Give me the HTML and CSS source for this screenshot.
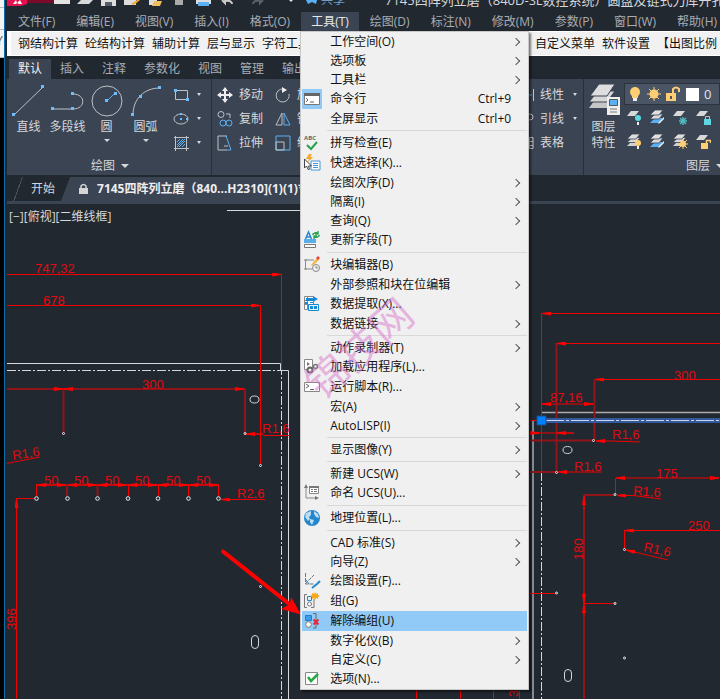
FILE: index.html
```html
<!DOCTYPE html>
<html lang="zh-CN">
<head>
<meta charset="utf-8">
<title>7145四阵列立磨</title>
<link rel="stylesheet" href="styles.css">
</head>
<body>
<svg class="defs" width="0" height="0" aria-hidden="true">
  <defs>
    <symbol id="sheet" viewBox="0 0 16 16"><path d="M5 2h8l-4 5H1z" fill="#d8d8d8"/></symbol>
    <symbol id="sheets" viewBox="0 0 16 16"><path d="M6 8h8l-4 5H1z" fill="#d0d0d0"/><path d="M6 4.500h8l-4 5H1z" fill="#d8d8d8" stroke="#3b4453" stroke-width=".8"/><path d="M6 1h8l-4 5H1z" fill="#dedede" stroke="#3b4453" stroke-width=".8"/></symbol>
    <symbol id="sheetsblue" viewBox="0 0 16 16"><path d="M6 9h8l-4 5H1z" fill="#5ab0f5"/><path d="M6 5h8l-4 5H1z" fill="#d8d8d8" stroke="#3b4453" stroke-width=".8"/><path d="M6 1h8l-4 5H1z" fill="#dedede" stroke="#3b4453" stroke-width=".8"/><path d="M15 8l-5 5-1 2 2-1 4-4z" fill="#eee"/></symbol>
    <marker id="tip" viewBox="0 0 9 4" refX="9" refY="2" markerWidth="9" markerHeight="4" markerUnits="userSpaceOnUse" orient="auto-start-reverse"><path d="M0 0L9 1.500V2.500L0 4z" fill="#f00"/></marker>
  </defs>
</svg>

<div class="screen">
  <div class="behind"><span></span><span></span><span>Y</span></div>
  <div class="app">
    <header class="titlebar">
      <svg class="quick" width="314" height="12" aria-hidden="true">
        <path d="M0 0h20v4l-6 2H0z" fill="#e5104f"/><path d="M6 4l3-4 1 3 3-3 2 4h-3l-2-1-1 1z" fill="#fff"/>
        <path d="M20 0h28v3H20z" fill="#7b0a2b"/>
        <path d="M47 0h16v4H47z" fill="#e3e3e3"/><path d="M70 4l4-4h12l-4 4z" fill="#d8d8d8"/>
        <path d="M94 0h15v6H94z" fill="#ddd"/><path d="M98 2h7v4h-7z" fill="#555c68"/>
        <path d="M117 0h12v5H117z" fill="#ddd"/><path d="M124 4l6-4h3l-6 5z" fill="#f5a93a"/>
        <path d="M142 0h8v5h-8z" fill="#ddd"/><path d="M147 1h8l-2 5h-8z" fill="#f2bd5f"/>
        <path d="M168 0h8v5h-8z" fill="#aaa"/>
        <path d="M189 0h15v4h-15z" fill="#ddd"/><path d="M191 2h11v4h-11z" fill="#5ab0f5"/>
        <path d="M215 0l3 3v-2c5-1 7 1 7 3" fill="none" stroke="#ccc" stroke-width="2"/>
        <path d="M256 0l-3 3v-2c-5-1-7 1-7 3" fill="none" stroke="#59616d" stroke-width="2"/>
        <path d="M282 0h4l-2 2z" fill="#ddd"/>
        <path d="M299 0h11l-1 4-4-2-4 2z" fill="#5ab0f5"/>
      </svg>
      <span class="share">共享</span>
      <span class="doc">7145四阵列立磨（840D-SL数控系统）圆盘及链式刀库开孔图[BFH2310]</span>
    </header>

    <nav class="menubar">
      <button>文件(F)</button><button>编辑(E)</button><button>视图(V)</button><button>插入(I)</button><button>格式(O)</button>
      <div class="open">
        <button class="current">工具(T)</button>
        <div class="menu" role="menu">
          <button class="sub" role="menuitem">工作空间(O)</button>
          <button class="sub" role="menuitem">选项板</button>
          <button class="sub" role="menuitem">工具栏</button>
          <button class="pic on" role="menuitem"><svg viewBox="0 0 20 20"><path d="M2.500 4.500h15v11h-15z" fill="#fff" stroke="#777"/><path d="M2 4h16v3H2z" fill="#666"/><path d="M4 9l2 2-2 2M8 13h4" fill="none" stroke="#666"/></svg>命令行<kbd>Ctrl+9</kbd></button>
          <button role="menuitem">全屏显示<kbd>Ctrl+0</kbd></button>
          <hr>
          <button class="pic" role="menuitem"><svg viewBox="0 0 20 20"><text x="2" y="7" font-size="6" font-weight="bold" fill="#666">ABC</text><path d="M5 12l4 4 6-7" fill="none" stroke="#27a050" stroke-width="2"/></svg>拼写检查(E)</button>
          <button class="pic" role="menuitem"><svg viewBox="0 0 20 20"><path d="M9 8h9v9H9z" fill="#fff" stroke="#4595d5"/><path d="M11 10.500h5M11 12.500h5M11 14.500h5" stroke="#4595d5"/><path d="M2.500 6v9l2-2 2 4 1-1-1-3h3z" fill="#fff" stroke="#444"/><path d="M7 1L4 6h3L6 9l5-5H8l2-3z" fill="#f7a61b"/></svg>快速选择(K)...</button>
          <button class="sub" role="menuitem">绘图次序(D)</button>
          <button class="sub" role="menuitem">隔离(I)</button>
          <button class="sub" role="menuitem">查询(Q)</button>
          <button class="pic" role="menuitem"><svg viewBox="0 0 20 20"><path d="M3.500 9L6.500 2l3 7M4.500 7h4" fill="none" stroke="#2888cf" stroke-width="1.500"/><path d="M2 9h12v4H2z" fill="#5aaee8"/><path d="M2.500 14.500h11v3h-11z" fill="#fff" stroke="#777"/><path d="M10.500 5a4 3 0 0 1 6-2M17.500 5a4 3 0 0 1-6 2M16 1v3h-3M12 9V6h3" fill="none" stroke="#27a050" stroke-width="1.300"/></svg>更新字段(T)</button>
          <hr>
          <button class="pic" role="menuitem"><svg viewBox="0 0 20 20"><path d="M12 5H3.500v9H10M2 14h3M2 5h3" fill="none" stroke="#888"/><path d="M9 10l6-7 2 2-7 6z" fill="#f5b43a"/><path d="M14 3l2-2 2 2-2 2z" fill="#e94040"/><circle cx="14" cy="13" r="3.500" fill="none" stroke="#888"/><path d="M14 11v2h2" fill="none" stroke="#888"/></svg>块编辑器(B)</button>
          <button class="sub" role="menuitem">外部参照和块在位编辑</button>
          <button class="pic" role="menuitem"><svg viewBox="0 0 20 20"><path d="M2.500 2.500h9v13h-9zM2 6.500h9M2 10.500h6M5.500 2v13" fill="#fff" stroke="#888"/><path d="M4 4h7V2l5 3-5 3V7H4z" fill="#148ad7"/><path d="M3 8h3v2H3zM8 8h3v1H8z" fill="#148ad7"/><path d="M6.500 10.500h10v6h-10z" fill="#e9f5fd" stroke="#148ad7"/><path d="M8 12h3v3H8zM12 12h3v3h-3z" fill="#148ad7"/></svg>数据提取(X)...</button>
          <button class="sub" role="menuitem">数据链接</button>
          <hr>
          <button class="sub" role="menuitem">动作录制器(T)</button>
          <button class="pic" role="menuitem"><svg viewBox="0 0 20 20"><path d="M2.500 2.500h8v10h-8z" fill="#fff" stroke="#888"/><path d="M5 5l3 2-3 2z" fill="#777"/><circle cx="8" cy="13" r="2.500" fill="#eee" stroke="#666" stroke-width="2"/><circle cx="13.500" cy="9.500" r="2" fill="#eee" stroke="#777" stroke-width="1.500"/></svg>加载应用程序(L)...</button>
          <button class="pic" role="menuitem"><svg viewBox="0 0 20 20"><path d="M2.500 5.500h15v9h-15z" fill="#fff" stroke="#888"/><path d="M4 7l3 2-3 2M8 12.500h4" fill="none" stroke="#666"/></svg>运行脚本(R)...</button>
          <button class="sub" role="menuitem">宏(A)</button>
          <button class="sub" role="menuitem">AutoLISP(I)</button>
          <hr>
          <button class="sub" role="menuitem">显示图像(Y)</button>
          <hr>
          <button class="sub" role="menuitem">新建 UCS(W)</button>
          <button class="pic" role="menuitem"><svg viewBox="0 0 20 20"><path d="M4 4v11h11" fill="none" stroke="#888"/><path d="M4 1l2 4H2zM17 15l-4-2v4z" fill="#777"/><path d="M7.500 3.500h9v7h-9z" fill="#fff" stroke="#888"/><path d="M7 3h10v2H7zM9 6h2v1H9zM12 6h3v1h-3zM9 8h2v1H9zM12 8h3v1h-3z" fill="#777"/></svg>命名 UCS(U)...</button>
          <hr>
          <button class="pic" role="menuitem"><svg viewBox="0 0 20 20"><circle cx="10" cy="10" r="8" fill="#2686cb"/><path d="M4 5l5-2 0 4-2 2 1 2-2 2-3-4zM8 11l4 1-2 5-2-3zM12 3l4 3 1 4-3-1-2-3z" fill="#b9def3"/></svg>地理位置(L)...</button>
          <hr>
          <button class="sub" role="menuitem">CAD 标准(S)</button>
          <button class="sub" role="menuitem">向导(Z)</button>
          <button class="pic" role="menuitem"><svg viewBox="0 0 20 20"><path d="M3.500 2v11H12M3 13L12 4" fill="none" stroke="#777" stroke-dasharray="4 1"/><path d="M10 17l5-4 3-3" fill="none" stroke="#2388d0" stroke-width="2"/><path d="M4 9l3 4" stroke="#2388d0"/></svg>绘图设置(F)...</button>
          <button class="pic" role="menuitem"><svg viewBox="0 0 20 20"><path d="M5 3.500H2.500v13H5M9 16.500h3V8" fill="none" stroke="#777"/><path d="M5.500 5.500h4v4h-4z" fill="#d9efff" stroke="#2388d0"/><circle cx="7.500" cy="13" r="2" fill="#fff" stroke="#777"/><path d="M13 1l1 2 2-1 0 2 2 1-2 1v2l-2-1-1 2-1-2-2 1v-2l-2-1 2-1V2l2 1z" fill="#f8a81e"/></svg>组(G)</button>
          <button class="pic hot" role="menuitem"><svg viewBox="0 0 20 20"><path d="M3.500 4.500h6v5h-6z" fill="#3e9be6" stroke="#2380c8"/><circle cx="6.500" cy="13.500" r="2.800" fill="#fff" stroke="#777"/><path d="M11 2.500h3V17h-3" fill="none" stroke="#666"/><path d="M11.500 8.500l5 5m0-5l-5 5" stroke="#e9263c" stroke-width="2"/></svg>解除编组(U)</button>
          <button class="sub" role="menuitem">数字化仪(B)</button>
          <button class="sub" role="menuitem">自定义(C)</button>
          <button class="pic" role="menuitem"><svg viewBox="0 0 20 20"><path d="M3.500 3.500h12v12h-12z" fill="#fff" stroke="#888"/><path d="M6 8l3 4 7-7" fill="none" stroke="#27a844" stroke-width="2.500"/></svg>选项(N)...</button>
          <span class="stamp">锦技网</span>
        </div>
      </div>
      <button>绘图(D)</button><button>标注(N)</button><button>修改(M)</button><button>参数(P)</button><button>窗口(W)</button><button>帮助(H)</button>
    </nav>

    <div class="plugins">
      <div><button>钢结构计算</button><button>砼结构计算</button><button>辅助计算</button><button>层与显示</button><button>字符工具</button></div>
      <div><button>自定义菜单</button><button>软件设置</button><button>【出图比例</button></div>
    </div>

    <div class="tabs">
      <button class="current">默认</button><button>插入</button><button>注释</button><button>参数化</button><button>视图</button><button>管理</button><button>输出</button>
    </div>

    <div class="ribbon">
      <section class="panel draw">
        <div class="tools">
          <button class="big"><svg viewBox="0 0 34 34"><path d="M2 32L31 4" class="ln"/><path d="M0 30h3v3H0zM29 2h3v3h-3z" class="pt"/></svg>直线</button>
          <button class="big"><svg viewBox="0 0 34 34"><path d="M1 26h21c13 0 13-15 0-15" class="ln"/><path d="M0 24h3v3H0zM20 24h3v3h-3zM20 9h3v3h-3z" class="pt"/></svg>多段线</button>
          <button class="big more"><svg viewBox="0 0 34 34"><circle cx="17" cy="18" r="15" class="ln"/><path d="M17 18l8-8" stroke="#5ab0f5"/><path d="M15 16h3v3h-3zM24 9h3v3h-3z" class="pt"/></svg>圆</button>
          <button class="big more"><svg viewBox="0 0 34 34"><path d="M4 32C4 16 15 5 31 5" class="ln"/><path d="M2 30h3v3H2zM10 12h3v3h-3zM29 3h3v3h-3z" class="pt"/></svg>圆弧</button>
          <div class="shapes">
            <button aria-label="矩形"><svg viewBox="0 0 16 16"><path d="M2.500 3.500h12v9h-12z" class="ln"/><path d="M1 2h3v3H1zM13 11h3v3h-3z" class="pt"/></svg></button>
            <button aria-label="椭圆"><svg viewBox="0 0 16 16"><ellipse cx="8" cy="8" rx="7" ry="5" class="ln"/><path d="M7 7h2v2H7zM7 2h2v2H7zM13 7h2v2h-2z" class="pt"/></svg></button>
            <button aria-label="填充"><svg viewBox="0 0 16 16"><path d="M1 2.500h15M1 13.500h15M2.500 1v15M13.500 1v15" class="ln"/><path d="M4 7l3-3M4 10l6-6M4 12l8-8M6 12l6-6M9 12l3-3" stroke="#5ab0f5"/></svg></button>
          </div>
        </div>
        <h2>绘图<i class="caret"></i></h2>
      </section>
      <section class="panel modify">
        <div class="tools grid">
          <button><svg viewBox="0 0 16 16"><path d="M8 2v12M2 8h12" stroke="#eee" stroke-width="2"/><path d="M8 0l3 4H5zM8 16l3-4H5zM0 8l4-3v6zM16 8l-4-3v6z" fill="#eee"/></svg>移动</button>
          <button><svg viewBox="0 0 16 16"><path d="M8 2A6.500 6.500 0 1 0 14 7" class="ln"/><path d="M7 0l5 3-5 3z" fill="#eee"/></svg>旋转</button>
          <button><svg viewBox="0 0 16 16"><circle cx="4" cy="3.500" r="3" class="ln"/><path d="M9 3h4v4" class="ln"/><circle cx="6" cy="12" r="3" class="bl"/><circle cx="12" cy="12" r="3" class="bl"/></svg>复制</button>
          <button><svg viewBox="0 0 16 16"><path d="M7 2v12H1z" class="ln"/><path d="M9 2v12h6z" class="bl"/></svg>镜像</button>
          <button><svg viewBox="0 0 16 16"><path d="M10 1H1v14h9M7 11h4" class="ln"/><path d="M9 1l5 14h-4" class="bl"/></svg>拉伸</button>
          <button><svg viewBox="0 0 16 16"><path d="M1 1h14v14H1z" class="bl"/><path d="M1 7h8v8H1z" class="ln"/></svg>缩放</button>
        </div>
      </section>
      <section class="panel notes">
        <div class="tools rows">
          <button><svg viewBox="0 0 16 16"><path d="M0 8h13" stroke="#5ab0f5"/><path d="M14.500 2v12" class="ln"/></svg>线性<i class="caret"></i></button>
          <button><svg viewBox="0 0 16 16"><circle cx="11" cy="6" r="3" class="ln"/></svg>引线<i class="caret"></i></button>
          <button><svg viewBox="0 0 16 16"><path d="M1 2.500h13v11H1zM1 6.500h13M1 10.500h13M10.500 2v12" class="ln"/></svg>表格</button>
        </div>
      </section>
      <section class="panel layers">
        <div class="tools">
          <button class="props"><svg viewBox="0 0 34 34"><path d="M10 14h18l-8 11H2z" fill="#c6c6c6"/><path d="M11 8h17l-8 11H2z" fill="#d6d6d6" stroke="#3b4453"/><path d="M12 1h16L20 13H3z" fill="#dedede" stroke="#3b4453"/><path d="M20 14h13v18H20z" fill="#eee"/><path d="M22.500 16.500h8v6h-8z" fill="#5ab0f5" stroke="#555"/><path d="M23 26h7M23 29h7" stroke="#777"/></svg>图层<br>特性</button>
          <div class="set">
            <button class="combo"><svg width="96" height="20" viewBox="0 0 96 20"><circle cx="10" cy="8" r="5" fill="#fdce74"/><path d="M7 11h6v3H7z" fill="#fdce74"/><path d="M8 14h4v3H8z" fill="#eee"/><circle cx="29" cy="10" r="4.500" fill="#fdce74"/><path d="M29 3v14M22 10h14M24 5l10 10M34 5L24 15" stroke="#fdce74"/><path d="M41 9h10v8H41z" fill="#fdce74"/><path d="M48 9V5q3-3 6 0v3" fill="none" stroke="#fdce74" stroke-width="2"/><path d="M45 12h2v3h-2z" fill="#555"/><path d="M61 4h13v13H61z" fill="#fff"/><text x="79" y="15" font-size="13" fill="#e3e3e3">0</text></svg></button>
            <div class="icons">
              <button aria-label="关闭"><svg viewBox="0 0 16 16"><use href="#sheet"/><circle cx="12" cy="9" r="3" fill="#60d6e2"/><path d="M11 13h2v3h-2z" fill="#eee"/></svg></button>
              <button aria-label="置为当前"><svg viewBox="0 0 16 16"><use href="#sheetsblue"/></svg></button>
              <button aria-label="冻结"><svg viewBox="0 0 16 16"><use href="#sheet"/><path d="M11 8v8M7 12h8M8 9l6 6M14 9l-6 6" stroke="#4db8bd" stroke-width="1.500"/></svg></button>
              <button aria-label="锁定"><svg viewBox="0 0 16 16"><use href="#sheet"/><path d="M9 10h7v6H9z" fill="#60d6e2"/><path d="M10.500 10V7.500h4V10" class="ln"/></svg></button>
              <button aria-label="打开"><svg viewBox="0 0 16 16"><use href="#sheets"/><circle cx="12" cy="10" r="3" fill="#fdce74"/><path d="M11 13h2v3h-2z" fill="#eee"/></svg></button>
              <button aria-label="匹配"><svg viewBox="0 0 16 16"><use href="#sheetsblue"/></svg></button>
              <button aria-label="解冻"><svg viewBox="0 0 16 16"><use href="#sheets"/><circle cx="11" cy="11" r="3" fill="#fdce74"/><path d="M11 6v10M6 11h10M7 7l8 8M15 7l-8 8" stroke="#fdce74"/></svg></button>
              <button aria-label="解锁"><svg viewBox="0 0 16 16"><use href="#sheet"/><path d="M6 10h7v6H6z" fill="#fdce74"/><path d="M11.500 10V7.500h4V10" fill="none" stroke="#fdce74" stroke-width="1.500"/></svg></button>
            </div>
          </div>
        </div>
        <h2>图层<i class="caret"></i></h2>
      </section>
    </div>

    <div class="files">
      <button>开始</button>
      <button class="current"><svg viewBox="0 0 10 12"><path d="M1 5h9v6H1z" fill="#d5d5d5"/><path d="M3 5V3q2.500-3 5 0v2" fill="none" stroke="#d5d5d5" stroke-width="1.500"/></svg>7145四阵列立磨（840...H2310](1)(1)*</button>
    </div>

    <main class="canvas">
      <svg class="drawing" width="100%" height="100%">
        <g transform="translate(-7 -204)">
          <text class="view" x="9" y="221">[−][俯视][二维线框]</text>
          <g class="white">
            <path d="M227 210.500H302M7 363.500H280.500V370.500H288.500V699"/>
            <path d="M7 370.500H281.500V699M541.500 472V699" stroke-dasharray="9 2 2 2"/>
            <ellipse cx="254.500" cy="399.500" rx="4.500" ry="3.500"/><rect x="251.500" y="635.500" width="7" height="13" rx="3.500"/>
            <ellipse cx="567.500" cy="450" rx="4.500" ry="3.500"/><rect x="564.500" y="669.500" width="7" height="12" rx="3.500"/>
          </g>
          <path d="M533 421V699" stroke="#858b95" stroke-width="2"/>
          <path d="M541 412.500H720" stroke="#aaa" stroke-width="1.500"/>
          <g class="dim">
            <path d="M7 389H245M63.500 389V433M245 389V433M245 434H263"/>
            <path d="M36.500 485H218.500M67 485V496M97.500 485V496"/>
            <path d="M530 440.500H594M594.500 379V440M556.500 343V472M530 472H556M584 495H615M584 495V699"/>
          </g>
          <g class="red">
            <path d="M7 274.500H281" marker-end="url(#tip)"/><path d="M281.500 274V370"/>
            <path d="M7 305.500H260" marker-end="url(#tip)"/><path d="M260.500 305V465"/>
            <path d="M53 389H63" marker-end="url(#tip)"/><path d="M73 389H64" marker-end="url(#tip)"/><path d="M235 389H244" marker-end="url(#tip)"/>
            <path d="M263 434H246" marker-end="url(#tip)"/><path d="M263 435.500H290M7 463.500L14 462L40 457"/>
            <path d="M37 485H66" marker-start="url(#tip)" marker-end="url(#tip)"/><path d="M68 485H97" marker-start="url(#tip)" marker-end="url(#tip)"/><path d="M98 485H127" marker-start="url(#tip)" marker-end="url(#tip)"/><path d="M128 485H157" marker-start="url(#tip)" marker-end="url(#tip)"/><path d="M158 485H188" marker-start="url(#tip)" marker-end="url(#tip)"/><path d="M189 485H218" marker-start="url(#tip)" marker-end="url(#tip)"/>
            <path d="M36.500 484V496M128.500 485V496M158.500 484V496M188.500 484V496M218.500 484V496M16 498.500H36"/>
            <path d="M265 499.500H221" marker-end="url(#tip)"/><path d="M16.500 699V499" marker-end="url(#tip)"/>
            <path d="M720 313.500H542" marker-end="url(#tip)"/><path d="M541.500 313V472"/>
            <path d="M720 343.500H557" marker-end="url(#tip)"/><path d="M720 379.500H595" marker-end="url(#tip)"/>
            <path d="M542 404H593" marker-start="url(#tip)" marker-end="url(#tip)"/>
            <path d="M530 420.500H537M530 433H574"/><path d="M530 433H539" marker-end="url(#tip)"/><path d="M574 433H557" marker-end="url(#tip)"/>
            <path d="M640 442L612 441H596" marker-end="url(#tip)"/><path d="M602 472H558" marker-end="url(#tip)"/>
            <path d="M616 478H719" marker-start="url(#tip)" marker-end="url(#tip)"/><path d="M615.500 478V494"/><path d="M661 499L633 495.500H617" marker-end="url(#tip)"/>
            <path d="M584 510V496" marker-end="url(#tip)"/><path d="M720 530.500H625" marker-end="url(#tip)"/><path d="M624.500 530V549"/><path d="M668 560L626 550" marker-end="url(#tip)"/>
            <path d="M530 593.500H556M584 603.500H615"/><path d="M584 592V603" marker-end="url(#tip)"/><path d="M584 616V604" marker-end="url(#tip)"/>
            <path d="M416.500 690V699M460.500 690V699M493.500 690V699M519.500 690V699"/>
          </g>
          <g class="nums">
            <text x="35" y="273">747,32</text><text x="43" y="305">678</text><text x="142" y="389">300</text><text x="262" y="433">R1,6</text>
            <text x="13" y="460" transform="rotate(-9 13 460)">R1,6</text>
            <text x="44" y="485">50</text><text x="74" y="485">50</text><text x="105" y="485">50</text><text x="135" y="485">50</text><text x="166" y="485">50</text><text x="196" y="485">50</text>
            <text x="237" y="498">R2,6</text><text transform="translate(16 630) rotate(-90)">396</text>
            <text x="674" y="380">300</text><text x="550" y="402">87,16</text><text x="612" y="439">R1,6</text><text x="574" y="471">R1,6</text><text x="656" y="478">175</text>
            <text x="633" y="495" transform="rotate(4 633 495)">R1,6</text><text transform="translate(583 560) rotate(-90)">180</text><text x="688" y="530">250</text>
            <text x="643" y="551" transform="rotate(12 643 551)">R1,6</text><text transform="translate(518 697) rotate(-90)">3</text>
          </g>
          <g class="holes">
            <circle cx="36.500" cy="498.500" r="1.800"/><circle cx="67.500" cy="498.500" r="1.800"/><circle cx="97.500" cy="498.500" r="1.800"/><circle cx="128" cy="498.500" r="1.800"/><circle cx="158" cy="498.500" r="1.800"/><circle cx="188.500" cy="498.500" r="1.800"/><circle cx="218.500" cy="498.500" r="1.800"/>
            <circle cx="63.500" cy="433.500" r="1"/><circle cx="245" cy="433.500" r="1"/><circle cx="260.500" cy="465.500" r="1"/><circle cx="260.500" cy="586.500" r="1"/>
            <circle cx="593.500" cy="440.500" r="1"/><circle cx="556.500" cy="472.500" r="1"/><circle cx="615" cy="494.500" r="1"/><circle cx="624.500" cy="549.500" r="1"/><circle cx="556.500" cy="593" r="1"/><circle cx="615" cy="603.500" r="1"/><circle cx="624.500" cy="658" r="1"/>
          </g>
          <path d="M546 420.500H720" stroke="#34589c" stroke-width="5"/><path d="M546 420.500H720" stroke="#cdd6ea" stroke-dasharray="18 2 3 2"/>
          <path d="M537 416h9v9h-9z" fill="#0080ff" stroke="#174d86"/>
          <path d="M223 551.500L288 603" stroke="#f00" stroke-width="4" stroke-linecap="round"/><path d="M301 614.500L291 597L290 604L281 609z" fill="#f00"/>
        </g>
      </svg>
    </main>
  </div>
</div>
</body>
</html>
```

FILE: styles.css
```css
* { box-sizing: border-box; }

body {
  margin: 0;
  background: #222830;
  color: #d6d8db;
  font: 12px/16px "Open Sans", "Noto Sans CJK SC", sans-serif;
}

button {
  margin: 0;
  padding: 0;
  border: 0;
  background: none;
  color: inherit;
  font: inherit;
  white-space: nowrap;
}

svg { display: block; flex: none; }
.defs { position: absolute; }

.screen { display: flex; height: 100vh; overflow: hidden; }

/* Edge of the window behind the application */
.behind {
  flex: none;
  width: 5px;
  background: #000;
  border-right: 1px solid #0a6fae;
  overflow: hidden;
}
.behind span { display: block; height: 22px; background: #f3f3f3; border-bottom: 1px solid #bbb; color: #555; }
.behind span:first-child { height: 8px; }
.behind span:last-child { height: 28px; text-indent: -4px; line-height: 22px; }

.app {
  flex: 1;
  min-width: 0;
  display: flex;
  flex-direction: column;
  padding-left: 2px;
}

.titlebar { display: flex; flex: none; height: 12px; overflow: hidden; line-height: 12px; white-space: nowrap; }
.share { flex: none; margin-top: -6px; width: 64px; color: #6d9fc5; }
.doc { margin-top: -6px; font-size: 13px; }

.menubar { display: flex; gap: 1px; flex: none; height: 19px; padding-left: 1px; color: #a9adb3; }
.menubar > button, .open > button { height: 19px; padding: 0 10px; }
.open { position: relative; }
.open > .current { background: #3b4453; color: #e6e8ea; }

.menu {
  position: absolute;
  z-index: 2;
  top: 100%;
  left: -1px;
  width: 229px;
  padding: 0 1px;
  background: #f0f0f0;
  border: 1px solid #c8c8c8;
  box-shadow: 2px 2px 2px rgba(0, 0, 0, .5);
  color: #111;
}
.menu button { display: flex; align-items: center; width: 225px; height: 19px; padding-left: 28px; }
.menu .pic { height: 20px; padding-left: 0; }
.menu .pic svg { width: 20px; height: 20px; margin-right: 8px; }
.menu .on svg, .menu .hot { background: #91c9f7; }
.menu kbd { margin-left: auto; margin-right: 16px; font: inherit; }
.menu hr { height: 1px; margin: 2px 0 2px 25px; border: 0; background: #d9d9d9; }
.menu .sub::after {
  content: "";
  width: 5px;
  height: 5px;
  margin-left: auto;
  margin-right: 8px;
  border: solid #555;
  border-width: 1px 1px 0 0;
  transform: rotate(45deg);
}
.stamp {
  position: absolute;
  left: -5px;
  top: 288px;
  color: rgba(213, 105, 201, .45);
  font-size: 42px;
  line-height: 56px;
  white-space: nowrap;
  transform: rotate(-41deg);
  pointer-events: none;
}

.plugins {
  display: flex;
  justify-content: space-between;
  flex: none;
  height: 25px;
  padding-left: 7px;
  background: #f1f1f1;
  border: solid #fff;
  border-width: 1px 0 1px 4px;
  color: #111;
  overflow: hidden;
}
.plugins div { display: flex; gap: 7px; }
.plugins div:last-child { padding-right: 3px; }

.tabs { display: flex; flex: none; padding: 3px 0 0 2px; color: #a9adb3; }
.tabs button { height: 20px; padding: 0 9px; }
.tabs .current { background: #3b4453; color: #eee; }

.ribbon { display: flex; flex: none; height: 96px; background: #3b4453; overflow: hidden; }
.panel { display: flex; flex-direction: column; flex: none; border-right: 1px solid #29303b; padding-top: 4px; }
.panel button { display: flex; align-items: center; }
.panel h2 { display: flex; align-items: center; justify-content: center; gap: 6px; margin: auto 0 1px; font-size: 12px; font-weight: normal; }
.tools { display: flex; }
.draw { width: 205px; padding-left: 2px; }
.big { flex-direction: column; width: 39px; height: 64px; }
.panel .big svg { width: 34px; height: 34px; margin-bottom: 2px; }
.more::after { content: ""; margin-top: 4px; border: 3px solid transparent; border-top-color: #d6d8db; }
.shapes { padding-left: 8px; }
.shapes button { height: 24px; gap: 8px; }
.shapes button::after, .notes .caret { content: ""; border: 2px solid transparent; border-top: 3px solid #d6d8db; }
.panel svg { width: 16px; height: 16px; }
.caret { border: 4px solid transparent; border-top-color: #d6d8db; border-bottom: 0; }
.modify { flex: 1; padding-left: 5px; min-width: 0; }
.grid { display: grid; grid-template-columns: 58px 58px; grid-auto-rows: 24px; }
.grid button { gap: 6px; }
.notes { width: 65px; }
.rows { flex-direction: column; }
.rows button { height: 24px; gap: 5px; }
.notes .caret { margin-left: 4px; }
.layers { width: 136px; border: 0; padding-left: 3px; }
.panel.layers h2 { margin-left: 99px; justify-content: flex-start; white-space: nowrap; }
.panel .props { flex-direction: column; width: 33px; margin-right: 4px; }
.panel .props svg { width: 34px; height: 34px; margin-bottom: 2px; }
.panel .combo { width: 96px; height: 22px; background: #4a5566; border: 1px solid #2c333e; }
.panel .combo svg { width: 96px; height: 20px; }
.icons { display: grid; grid-template-columns: repeat(4, 23px); grid-auto-rows: 24px; padding-left: 2px; }

.ln { fill: none; stroke: #bfc2c6; }
.bl { fill: none; stroke: #5ab0f5; }
.pt { fill: #6dbcfb; }

.files { display: flex; flex: none; height: 29px; padding-top: 2px; border-bottom: 3px solid #3b4453; }
.files button { padding: 0 6px 0 24px; background: linear-gradient(110deg, transparent 14px, #4a525e 14px, #4a525e 15px, transparent 15px); }
.files .current {
  display: flex;
  align-items: center;
  gap: 9px;
  background: #3b4453;
  clip-path: polygon(9px 0, 100% 0, 100% 100%, 0 100%);
  padding-left: 17px;
  color: #eee;
  font-weight: bold;
}
.files svg { width: 10px; height: 12px; }

.canvas { flex: 1; min-height: 0; background: #222830; }
.drawing path { fill: none; }
.drawing path[fill] { fill: #0080ff; }
.drawing path[fill="#f00"] { fill: #f00; }
.white { fill: none; stroke: #d5d7da; }
.red { stroke: #f00000; }
.dim { stroke: #8f151b; stroke-width: 2; }
.nums { fill: #e00a0f; font: 13px "Liberation Sans", sans-serif; }
.holes { fill: #222830; stroke: #eee; }
.view { fill: #d6d8db; }
```
